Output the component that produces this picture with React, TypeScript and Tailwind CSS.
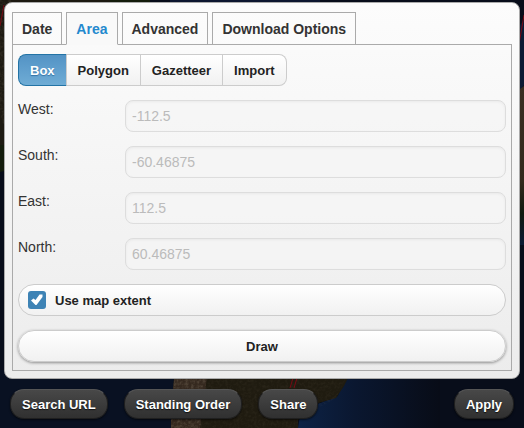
import type { ReactNode } from "react";

function MapBackdrop() {
  return (
    <svg className="absolute inset-0 h-full w-full" viewBox="0 0 524 428" preserveAspectRatio="none" aria-hidden="true">
      <defs>
        <filter id="terrain" x="0" y="0" width="100%" height="100%">
          <feTurbulence type="fractalNoise" baseFrequency="0.35" numOctaves="3" seed="4" />
          <feColorMatrix values="0 0 0 0 0.5  0 0 0 0 0.42  0 0 0 0 0.3  0.9 0 0 0 -0.35" />
          <feComposite in2="SourceGraphic" operator="in" />
        </filter>
        <linearGradient id="coast" x1="0" x2="1">
          <stop offset="0" stopColor="#0d2346" />
          <stop offset="0.4" stopColor="#0a1730" />
          <stop offset="1" stopColor="#080c17" />
        </linearGradient>
        <linearGradient id="shore" x1="0" x2="0" y1="0" y2="1">
          <stop offset="0" stopColor="#3a2e22" />
          <stop offset="0.6" stopColor="#33291c" />
          <stop offset="0.8" stopColor="#10190e" />
          <stop offset="1" stopColor="#0c1a34" />
        </linearGradient>
      </defs>
      <rect width="524" height="428" fill="#080d1a" />
      <path d="M0 0H110V3H60L12 12V166L0 172Z" fill="#1d1a12" />
      <path d="M0 145H8V170L0 172Z" fill="#131c0c" />
      <path d="M110 0H150V4H110Z" fill="#141c0c" />
      <path d="M170 0H320V4H170Z" fill="#0d1730" />
      <path d="M516 30L524 20V85L516 95Z" fill="#0c1a34" />
      <path d="M516 92L524 86V245H516Z" fill="url(#shore)" />
      <path d="M0 370H176V428H0Z" fill="#091122" />
      <path d="M345 370H440V428H298L300 416L318 404L338 396Z" fill="url(#coast)" />
      <path d="M175 370H352L344 386L336 398L318 403L308 414L298 420V428H171V408Z" fill="#1f1b10" />
      <path d="M175 370H208L200 428H171V408Z" fill="#35291f" />
      <path d="M175 370H208L200 428H171V408Z" filter="url(#terrain)" opacity="0.5" />
      <path d="M208 370H350L336 398L298 420V428H200Z" filter="url(#terrain)" opacity="0.15" />
      <path d="M0 0H12V124H0Z" filter="url(#terrain)" opacity="0.3" />
      <path d="M4 5L0 26M524 15L517 56M293 378L290 388M297 378L294 388" stroke="#790914" fill="none" />
    </svg>
  );
}

function Tab({ children, active = false }: { children: ReactNode; active?: boolean }) {
  return (
    <button
      role="tab"
      aria-selected={active}
      className={`relative h-[33px] border border-[#aaa] px-[9px] text-sm font-bold ${
        active ? "border-b-[#f9f9f9] bg-[#f9f9f9] text-[#2489ce]" : "text-[#333]"
      }`}
    >
      {children}
    </button>
  );
}

function Segment({ children, active = false }: { children: ReactNode; active?: boolean }) {
  return (
    <button
      aria-pressed={active}
      className={`h-8 border-y border-r px-[11px] pt-0.5 text-[13px] font-bold first:rounded-l-lg first:border-l last:rounded-r-lg ${
        active
          ? "border-[#2373a5] border-r-[#ccc] bg-linear-to-b from-[#5393c5] to-[#6facd5] text-white [text-shadow:0_1px_1px_#3373a5]"
          : "border-[#ccc] bg-linear-to-b from-white to-[#f1f1f1] text-[#222]"
      }`}
    >
      {children}
    </button>
  );
}

function Field({ label, value }: { label: string; value: string }) {
  const id = label.toLowerCase();
  return (
    <div className="flex h-8 items-start">
      <label htmlFor={id} className="w-[107px] shrink-0 text-sm leading-[18px] text-[#333]">
        {label}:
      </label>
      <input
        id={id}
        defaultValue={value}
        disabled
        className="h-8 min-w-0 flex-1 rounded-lg border border-[#ddd] bg-[#f5f5f5]/70 px-1.5 text-sm text-[#bbb] shadow-[inset_0_1px_3px_#0000000d]"
      />
    </div>
  );
}

function ActionButton({ children }: { children: ReactNode }) {
  return (
    <button className="h-[30px] rounded-[14px] border border-[#1f1f1f] border-t-[#555] bg-linear-to-b from-[#484848] to-[#303030] px-[11px] pt-0.5 text-[13px] font-bold text-white shadow-[0_1px_2px_#0009] [text-shadow:0_1px_1px_#111]">
      {children}
    </button>
  );
}

export default function App() {
  return (
    <main className="relative min-h-screen overflow-hidden bg-[#080d1a] font-['Liberation_Sans',Arial,sans-serif]">
      <MapBackdrop />
      <div className="relative pt-0.5 pr-1 pl-1">
        <section className="rounded-lg border border-[#aaa] bg-linear-to-b from-[#fcfcfc] to-[#ececec] px-[7px] pt-[9px] pb-[7px]">
          <div role="tablist" className="relative -mb-px flex gap-1">
            <Tab>Date</Tab>
            <Tab active>Area</Tab>
            <Tab>Advanced</Tab>
            <Tab>Download Options</Tab>
          </div>
          <form className="border border-[#aaa] px-[5px] pt-[9px] pb-2" onSubmit={(e) => e.preventDefault()}>
            <div className="flex">
              <Segment active>Box</Segment>
              <Segment>Polygon</Segment>
              <Segment>Gazetteer</Segment>
              <Segment>Import</Segment>
            </div>
            <div className="mt-3.5 grid gap-3.5">
              <Field label="West" value="-112.5" />
              <Field label="South" value="-60.46875" />
              <Field label="East" value="112.5" />
              <Field label="North" value="60.46875" />
            </div>
            <label className="mt-3.5 flex h-8 items-center gap-[9px] rounded-2xl border border-[#ccc] bg-linear-to-b from-white to-[#f1f1f1] pl-[9px] text-[13px] font-bold text-[#222]">
              <span className="grid h-[18px] w-[18px]">
                <input type="checkbox" defaultChecked className="col-start-1 row-start-1 h-[18px] w-[18px] appearance-none rounded-[3px] bg-[#3e83b5]" />
                <svg className="pointer-events-none col-start-1 row-start-1" viewBox="0 0 18 18" aria-hidden="true">
                  <path d="M3 9.5L5.5 7.5L7.5 9L11.5 3.5H14.5V6L8.5 14H7.5Z" fill="#fff" />
                </svg>
              </span>
              <span className="pt-0.5">Use map extent</span>
            </label>
            <button className="mt-3.5 block h-8 w-full rounded-2xl border border-[#ccc] bg-linear-to-b from-white to-[#f1f1f1] pt-0.5 text-[13px] font-bold text-[#222] shadow-[0_1px_3px_#0006]">
              Draw
            </button>
          </form>
        </section>
        <div className="mt-2.5 flex gap-4 pr-1.5 pl-1.5">
          <ActionButton>Search URL</ActionButton>
          <ActionButton>Standing Order</ActionButton>
          <ActionButton>Share</ActionButton>
          <div className="ml-auto flex">
            <ActionButton>Apply</ActionButton>
          </div>
        </div>
      </div>
    </main>
  );
}
